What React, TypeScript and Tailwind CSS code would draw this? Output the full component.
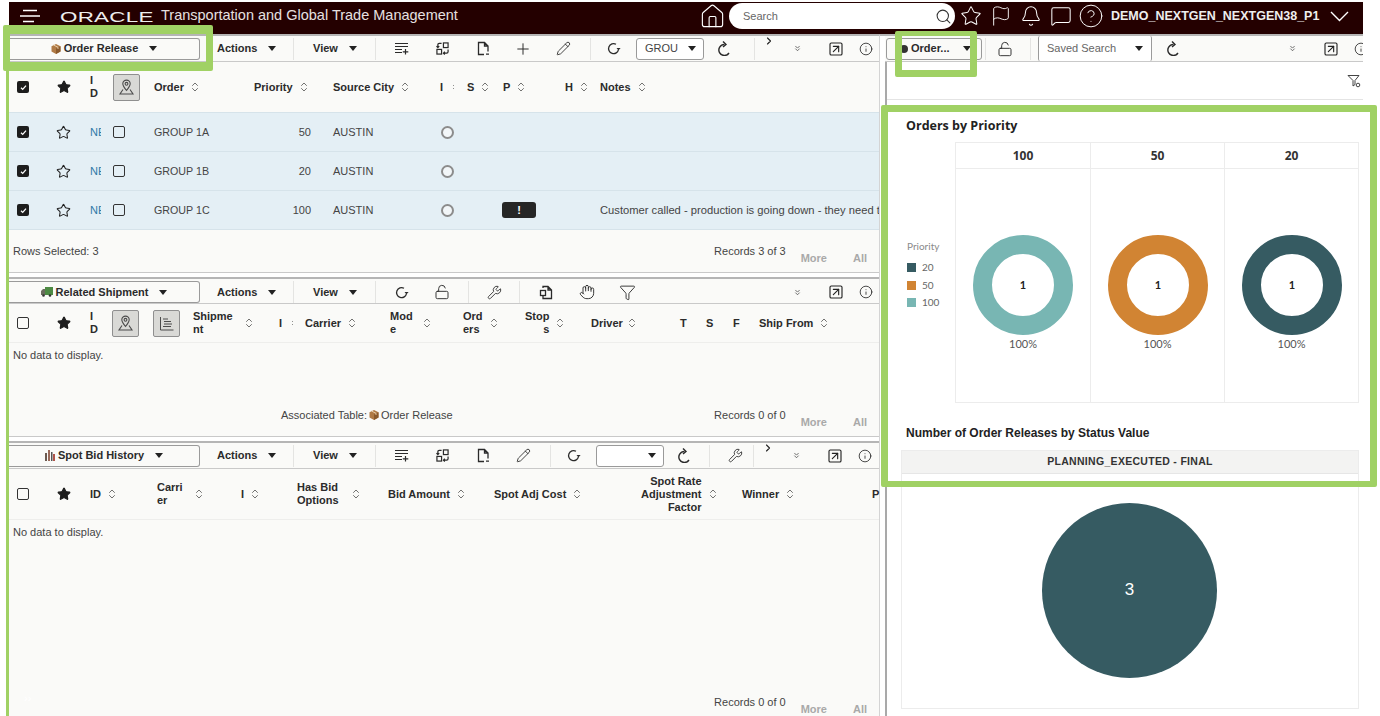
import { ReactNode } from "react";
import {
  Bell,
  ChevronRight,
  ChevronsDown,
  ChevronsUpDown,
  CircleHelp,
  Flag,
  Funnel,
  Hand,
  House,
  Info,
  LockOpen,
  MessageSquare,
  Pencil,
  Plus,
  Search,
  SquareArrowUpRight,
  Star,
  Wrench,
} from "lucide-react";

const ICON = "#2a2a2a";

const Caret = () => (
  <svg width="8" height="5" viewBox="0 0 8 5" className="shrink-0">
    <path d="M0 0h8L4 5z" fill="#222" />
  </svg>
);

const Sort = () => <ChevronsUpDown size={12} strokeWidth={1.5} color="#444" className="shrink-0" />;

const Checkbox = ({ checked = false }: { checked?: boolean }) =>
  checked ? (
    <span className="flex h-[12px] w-[12px] items-center justify-center rounded-[2px] bg-[#1d1d1d]">
      <svg width="9" height="9" viewBox="0 0 9 9">
        <path d="M2 4.8l1.7 1.6L7 2.6" fill="none" stroke="#fff" strokeWidth="1.3" />
      </svg>
    </span>
  ) : (
    <span className="block h-[12px] w-[12px] rounded-[2px] border border-[#333]" />
  );

const FilledStar = () => <Star size={14} fill="#1d1d1d" color="#1d1d1d" />;

const Box = ({ size = 10 }: { size?: number }) => (
  <svg width={size} height={size} viewBox="0 0 10 10" className="shrink-0">
    <path d="M5 0l4.5 2.2v5.3L5 10 .5 7.5V2.2z" fill="#b07a45" />
    <path d="M5 4.6L9.5 2.2v5.3L5 10z" fill="#8a5a2c" />
    <path d="M2.5 1L7 3.3v1.6" fill="none" stroke="#e8cda8" strokeWidth="1" />
  </svg>
);

const Truck = () => (
  <svg width="12" height="10" viewBox="0 0 12 10" className="shrink-0">
    <rect x="4" y="0" width="8" height="8" fill="#4d8a44" />
    <path d="M0 4l2-2h2v6H0z" fill="#6b6b5e" />
    <circle cx="2.5" cy="8.5" r="1.3" fill="#333" />
    <circle cx="9" cy="8.5" r="1.3" fill="#333" />
  </svg>
);

const BidIcon = () => (
  <svg width="10" height="11" viewBox="0 0 10 11" className="shrink-0">
    <rect x="0" y="3" width="2" height="8" fill="#6b5a50" />
    <rect x="3" y="0" width="2" height="11" fill="#9a6a5a" />
    <rect x="6" y="2" width="1.5" height="9" fill="#555" />
    <rect x="8" y="4" width="2" height="7" fill="#b0554a" />
  </svg>
);

const ListAdd = () => (
  <svg width="16" height="13" viewBox="0 0 16 13" fill="none" stroke={ICON} strokeWidth="1.2">
    <path d="M1 1.5h13M1 4.5h13M1 7.5h7M1 10.5h7M11.5 7v5.5M8.8 9.8h5.5" />
  </svg>
);

const Freeze = () => (
  <svg width="13" height="13" viewBox="0 0 14 14" fill="none" stroke={ICON} strokeWidth="1.3">
    <rect x="8" y="1" width="5" height="5" />
    <rect x="1" y="8" width="5" height="5" />
    <path d="M6 1.5H3.5Q2 1.5 2 3v3M.5 4.5L2 6l1.5-1.5M13 8v2.5Q13 12 11.5 12H8M9.5 10.5L8 12l1.5 1.5" />
  </svg>
);

const Doc = () => (
  <svg width="13" height="15" viewBox="0 0 13 15" fill="none" stroke={ICON} strokeWidth="1.3">
    <path d="M7 13.5H1.5v-12h6L11 5v5.5M7.5 1.5V5H11M9 13.2h3" />
  </svg>
);

const DocCopy = () => (
  <svg width="14" height="15" viewBox="0 0 14 15" fill="none" stroke={ICON} strokeWidth="1.3">
    <path d="M4 3V1.5h5L12.5 5v8.5H4V11M9 1.5V5h3.5" />
    <rect x="1.5" y="5.5" width="5" height="5" />
  </svg>
);

const Reload = () => (
  <svg width="15" height="15" viewBox="0 0 15 15" fill="none" stroke={ICON} strokeWidth="1.3">
    <path d="M12.5 8.5A5 5 0 1 1 10 3.3" />
    <path d="M10.5 7l2 2.2L14.6 7" fill={ICON} stroke="none" />
  </svg>
);

const Undo = () => (
  <svg width="14" height="15" viewBox="0 0 14 15" fill="none" stroke={ICON} strokeWidth="1.4">
    <path d="M12 12a5.5 5.5 0 1 1-4.500-8.500" />
    <path d="M6 .5l3 3-3 2.500" />
  </svg>
);

const MapButton = () => (
  <span className="flex h-[27px] w-[27px] items-center justify-center rounded-[2px] border border-[#8f8f8f] bg-[#d9d9d6]">
    <svg width="17" height="18" viewBox="0 0 17 18" fill="none" stroke="#4b4b4b" strokeWidth="1.1">
      <path d="M8.5 12.5C6 9.5 4.8 8 4.8 5.8a3.7 3.7 0 0 1 7.4 0c0 2.2-1.2 3.7-3.7 6.7z" />
      <circle cx="8.5" cy="5.8" r="1.4" />
      <path d="M5 11.5L2 16h13l-3-4.500" />
    </svg>
  </span>
);

const GanttButton = () => (
  <span className="flex h-[27px] w-[27px] items-center justify-center rounded-[2px] border border-[#8f8f8f] bg-[#d9d9d6]">
    <svg width="15" height="15" viewBox="0 0 15 15" fill="none" stroke="#4b4b4b" strokeWidth="1">
      <path d="M1.5 1v13h13M4 3h5M5 5.500h7M5 8h8M4 10.500h8" />
    </svg>
  </span>
);

const Slot = ({ className, children }: { className: string; children?: ReactNode }) => (
  <div className={`flex h-[22px] shrink-0 items-center justify-center ${className}`}>{children}</div>
);

const Menu = ({ label, className }: { label: string; className: string }) => (
  <div className={`flex h-[22px] shrink-0 items-center gap-[11px] border-r border-[#e4e4e2] text-[11px] font-bold text-[#2b2b2b] ${className}`}>
    {label} <Caret />
  </div>
);

const TableButton = ({ icon, label }: { icon: ReactNode; label: string }) => (
  <div className="flex h-[22px] w-[191px] shrink-0 items-center justify-center gap-[3px] rounded-r-[3px] border border-l-0 border-[#9a9a9a] bg-[#fafaf8] text-[11px] font-bold text-[#2b2b2b]">
    {icon}
    <span>{label}</span>
    <span className="ml-[8px]">
      <Caret />
    </span>
  </div>
);

const Select = ({ label }: { label?: string }) => (
  <div className="flex h-[22px] w-[68px] shrink-0 items-center justify-between rounded-[3px] border border-[#9a9a9a] bg-white pl-[8px] pr-[7px] text-[11px] text-[#444]">
    <span>{label}</span>
    <Caret />
  </div>
);

const Gt = () => (
  <Slot className="w-[28px] items-start border-l border-[#e4e4e2]">
    <ChevronRight size={12} strokeWidth={2.2} color="#222" className="-mt-[3px]" />
  </Slot>
);

const Dbl = () => <ChevronsDown size={9} strokeWidth={2} color="#444" />;

const ExpandIcon = () => <SquareArrowUpRight size={16} strokeWidth={1.7} color="#222" />;
const InfoIcon = () => <Info size={14} strokeWidth={1.4} color="#222" />;

const Corner = () => (
  <>
    <Slot className="w-[30px]">
      <Dbl />
    </Slot>
    <Slot className="ml-[4px] w-[40px]">
      <ExpandIcon />
    </Slot>
    <Slot className="w-[20px]">
      <InfoIcon />
    </Slot>
  </>
);

const Head = ({
  children,
  className = "",
  gap = "ml-[5px]",
}: {
  children: ReactNode;
  className?: string;
  gap?: string;
}) => (
  <div className={`flex items-center text-[11px] font-bold leading-[13px] text-[#2b2b2b] ${className}`}>
    <span>{children}</span>
    <span className={gap}>
      <Sort />
    </span>
  </div>
);

const Plain = ({ children, className = "" }: { children: ReactNode; className?: string }) => (
  <div className={`text-[11px] font-bold leading-[13px] text-[#2b2b2b] ${className}`}>{children}</div>
);

const StackedId = () => (
  <Plain className="pl-[9px]">
    I
    <br />D
  </Plain>
);

const CutSort = () => (
  <span className="ml-[7px] block w-[4px] overflow-hidden">
    <Sort />
  </span>
);

const Pager = ({ className = "" }: { className?: string }) => (
  <div className={`ml-[15px] flex gap-[26px] text-[11px] font-bold text-[#a9a9a9] ${className}`}>
    <span>More</span>
    <span>All</span>
  </div>
);

const Gap = () => (
  <div className="h-[7px] shrink-0 border-t border-[#c9c9c9] border-b-2 border-b-[#b5b5b5] bg-white" />
);

const P1COLS = "grid grid-cols-[37px_35px_28px_45px_100px_79px_107px_27px_36px_62px_35px_1fr] items-center";
const P2COLS = "grid grid-cols-[37px_35px_31px_41px_40px_86px_26px_85px_73px_62px_66px_89px_26px_27px_26px_1fr] items-center";
const P3COLS = "grid grid-cols-[37px_35px_76px_84px_56px_91px_106px_147px_101px_130px_1fr] items-center";

const rows = [
  { order: "GROUP 1A", priority: "50" },
  { order: "GROUP 1B", priority: "20" },
  { order: "GROUP 1C", priority: "100", flagged: true },
];

const OrderReleasePanel = () => (
  <>
    <div className="flex h-[26px] shrink-0 items-center border-b border-[#c9c9c9]">
      <TableButton icon={<Box />} label="Order Release" />
      <Menu label="Actions" className="ml-[5px] w-[89px] pl-[12px]" />
      <Menu label="View" className="w-[82px] pl-[19px]" />
      <Slot className="ml-[6px] w-[40px]"><ListAdd /></Slot>
      <Slot className="w-[41px]"><Freeze /></Slot>
      <Slot className="w-[40px]"><Doc /></Slot>
      <Slot className="w-[40px]"><Plus size={18} strokeWidth={1.3} color={ICON} /></Slot>
      <Slot className="w-[40px]"><Pencil size={15} strokeWidth={1.4} color={ICON} /></Slot>
      <Slot className="ml-[7px] w-[46px] border-l border-[#e4e4e2]"><Reload /></Slot>
      <Select label="GROU" />
      <Slot className="w-[39px]"><Undo /></Slot>
      <div className="w-[11px]" />
      <Gt />
      <Corner />
    </div>
    <div className={`${P1COLS} h-[50px] shrink-0`}>
      <div className="pl-[8px]"><Checkbox checked /></div>
      <div className="pl-[11px]"><FilledStar /></div>
      <StackedId />
      <div className="pl-[4px]"><MapButton /></div>
      <Head>Order</Head>
      <Head>Priority</Head>
      <Head>Source City</Head>
      <div className="flex items-center"><Plain>I</Plain><CutSort /></div>
      <Head>S</Head>
      <Head>P</Head>
      <Head>H</Head>
      <Head>Notes</Head>
    </div>
    {rows.map((row) => (
      <div key={row.order} className={`${P1COLS} h-[39px] shrink-0 border-t border-[#d6e3ea] bg-[#e4eff5] text-[11px] text-[#444]`}>
        <div className="pl-[8px]"><Checkbox checked /></div>
        <div className="pl-[10px]"><Star size={15} strokeWidth={1.7} color="#222" /></div>
        <div className="w-[20px] overflow-hidden whitespace-nowrap pl-[9px] text-[#2f7aa8]">NE</div>
        <div className="pl-[4px]"><Checkbox /></div>
        <div className="text-[10.7px]">{row.order}</div>
        <div className="pr-[22px] text-right">{row.priority}</div>
        <div>AUSTIN</div>
        <div className="pl-[1px]">
          <span className="block h-[13px] w-[13px] rounded-full border-2 border-[#8c8c8c] bg-[#f2f6f8]" />
        </div>
        <div />
        <div>
          {row.flagged && (
            <span className="-ml-[1px] flex h-[16px] w-[34px] items-center justify-center rounded-[3px] bg-[#262626] text-[11px] font-bold text-white">
              !
            </span>
          )}
        </div>
        <div />
        <div className="overflow-hidden whitespace-nowrap text-[11.2px]">
          {row.flagged && "Customer called - production is going down - they need the order"}
        </div>
      </div>
    ))}
    <div className="flex h-[43px] shrink-0 border-t border-[#d6e3ea] pl-[4px] pr-[12px] pt-[14px] text-[11px] leading-[14px] text-[#444]">
      <span>Rows Selected: 3</span>
      <span className="ml-auto">Records 3 of 3</span>
      <Pager className="mt-[7px]" />
    </div>
  </>
);

const ShipmentPanel = () => (
  <>
    <div className="flex h-[25px] shrink-0 items-center border-b border-[#c9c9c9] pr-[3px] pt-[2px]">
      <TableButton icon={<Truck />} label="Related Shipment" />
      <Menu label="Actions" className="ml-[5px] w-[89px] pl-[12px]" />
      <Menu label="View" className="w-[82px] pl-[19px]" />
      <Slot className="ml-[5px] w-[40px]"><Reload /></Slot>
      <Slot className="w-[41px]"><LockOpen size={16} strokeWidth={1.4} color={ICON} /></Slot>
      <Slot className="ml-[6px] w-[52px] border-x border-[#e4e4e2]"><Wrench size={15} strokeWidth={1.4} color={ICON} /></Slot>
      <Slot className="ml-[6px] w-[40px]"><DocCopy /></Slot>
      <Slot className="w-[42px]"><Hand size={16} strokeWidth={1.4} color={ICON} /></Slot>
      <Slot className="w-[38px]"><Funnel size={17} strokeWidth={1.3} color={ICON} /></Slot>
      <div className="flex-1" />
      <Corner />
    </div>
    <div className={`${P2COLS} h-[39px] shrink-0 border-b border-[#eeeeec]`}>
      <div className="pl-[8px]"><Checkbox /></div>
      <div className="pl-[11px]"><FilledStar /></div>
      <StackedId />
      <MapButton />
      <GanttButton />
      <Head gap="ml-[10px]">Shipme<br />nt</Head>
      <div className="flex items-center"><Plain>I</Plain><CutSort /></div>
      <Head>Carrier</Head>
      <Head gap="ml-[8px]">Mod<br />e</Head>
      <Head gap="ml-[5px]">Ord<br />ers</Head>
      <Head className="text-right" gap="ml-[5px]">Stop<br />s</Head>
      <Head gap="ml-[3px]">Driver</Head>
      <Plain>T</Plain>
      <Plain>S</Plain>
      <Plain>F</Plain>
      <Head>Ship From</Head>
    </div>
    <div className="flex h-[93px] shrink-0 flex-col pl-[4px] pr-[12px] pt-[5px] text-[11px] leading-[14px] text-[#444]">
      <div>No data to display.</div>
      <div className="mt-[46px] flex">
        <span className="ml-[268px] flex items-center gap-[2px] self-start">Associated Table: <Box /> Order Release</span>
        <span className="ml-auto">Records 0 of 0</span>
        <Pager className="mt-[7px]" />
      </div>
    </div>
  </>
);

const SpotBidPanel = () => (
  <div className="flex min-h-0 flex-1 flex-col">
    <div className="flex h-[26px] shrink-0 items-center border-b border-[#c9c9c9]">
      <TableButton icon={<BidIcon />} label="Spot Bid History" />
      <Menu label="Actions" className="ml-[5px] w-[89px] pl-[12px]" />
      <Menu label="View" className="w-[82px] pl-[19px]" />
      <Slot className="ml-[6px] w-[40px]"><ListAdd /></Slot>
      <Slot className="w-[41px]"><Freeze /></Slot>
      <Slot className="w-[40px]"><Doc /></Slot>
      <Slot className="w-[40px]"><Pencil size={15} strokeWidth={1.4} color={ICON} /></Slot>
      <Slot className="ml-[7px] w-[46px] border-l border-[#e4e4e2]"><Reload /></Slot>
      <Select />
      <Slot className="w-[39px]"><Undo /></Slot>
      <Slot className="ml-[6px] w-[44px] border-l border-[#e4e4e2] pl-[8px]"><Wrench size={15} strokeWidth={1.4} color={ICON} /></Slot>
      <Gt />
      <Corner />
    </div>
    <div className={`${P3COLS} h-[51px] shrink-0 border-b border-[#eeeeec]`}>
      <div className="pl-[8px]"><Checkbox /></div>
      <div className="pl-[11px]"><FilledStar /></div>
      <Head className="pl-[9px]">ID</Head>
      <Head gap="ml-[10px]">Carri<br />er</Head>
      <Head>I</Head>
      <Head gap="ml-[11px]">Has Bid<br />Options</Head>
      <Head>Bid Amount</Head>
      <Head>Spot Adj Cost</Head>
      <Head className="text-right">Spot Rate<br />Adjustment<br />Factor</Head>
      <Head>Winner</Head>
      <Plain>P</Plain>
    </div>
    <div className="flex min-h-0 flex-1 flex-col pl-[4px] pr-[12px] pt-[5px] text-[11px] leading-[14px] text-[#444]">
      <div>No data to display.</div>
      <div className="mt-[156px] flex">
        <span className="ml-auto">Records 0 of 0</span>
        <Pager className="mt-[7px]" />
      </div>
    </div>
  </div>
);

const Donut = ({ color }: { color: string }) => (
  <svg width="100" height="100" viewBox="0 0 100 100" className="mx-auto">
    <circle cx="50" cy="50" r="40.5" fill="none" stroke={color} strokeWidth="19" />
    <text x="50" y="54" textAnchor="middle" fontSize="11" fontWeight="700" fill="#222" fontFamily="Lato, sans-serif">
      1
    </text>
  </svg>
);

const priorities = [
  { label: "100", color: "#78b6b3" },
  { label: "50", color: "#d18433" },
  { label: "20", color: "#365b62" },
];

const ChartsPanel = () => (
  <div className="flex w-[478px] shrink-0 flex-col">
    <div className="flex h-[26px] shrink-0 items-center overflow-hidden border-b border-[#c9c9c9] bg-[#fafaf8]">
      <div className="ml-[1px] flex h-[22px] w-[96px] shrink-0 items-center rounded-[3px] border border-[#9a9a9a] pl-[13px] text-[11px] font-bold text-[#2b2b2b]">
        <span className="mr-[3px] h-[8px] w-[8px] rounded-full bg-[#333]" />
        Order...
        <span className="ml-[13px]"><Caret /></span>
      </div>
      <Slot className="ml-[3px] w-[46px] border-x border-[#e4e4e2] pr-[6px]"><LockOpen size={16} strokeWidth={1.4} color={ICON} /></Slot>
      <div className="ml-[7px] flex h-[25px] w-[114px] shrink-0 items-center justify-between rounded-[2px] border-x border-[#9a9a9a] bg-white pl-[8px] pr-[8px] text-[11px] text-[#666]">
        Saved Search
        <Caret />
      </div>
      <Slot className="ml-[2px] w-[38px]"><Undo /></Slot>
      <div className="w-[82px] shrink-0" />
      <Slot className="w-[36px]"><Dbl /></Slot>
      <Slot className="ml-[1px] w-[40px]"><ExpandIcon /></Slot>
      <Slot className="w-[20px]"><InfoIcon /></Slot>
    </div>
    <div className="flex min-h-0 flex-1 flex-col border-l-2 border-[#a9a9a9] bg-white">
      <div className="flex h-[38px] shrink-0 items-center justify-end border-b border-[#e4e4e4] pr-[2px]">
        <svg width="14" height="14" viewBox="0 0 14 14" fill="none" stroke="#444" strokeWidth="1">
          <path d="M1 1.5h11L8 6.5v4L6 12V6.500z" />
          <circle cx="11" cy="11" r="1.8" />
        </svg>
      </div>
      <div className="ml-[19px] mt-[19px] h-[14px] whitespace-nowrap text-[12.5px] font-bold leading-[14px] text-[#222] [font-family:'Open_Sans',sans-serif]">
        Orders by Priority
      </div>
      <div className="mt-[9px] flex h-[261px] shrink-0">
        <div className="ml-[20px] w-[48px] shrink-0 pt-[97px] text-[10px] text-[#666] [font-family:Lato,sans-serif]">
          <div className="mb-[5px] text-[#8a8a8a]">Priority</div>
          {[...priorities].reverse().map((item) => (
            <div key={item.label} className="flex h-[17.5px] items-center gap-[6px]">
              <span className="h-[9px] w-[9px]" style={{ backgroundColor: item.color }} />
              {item.label}
            </div>
          ))}
        </div>
        <div className="grid w-[404px] grid-cols-3 border border-[#ececec]">
          {priorities.map((item, i) => (
            <div key={item.label} className={`flex flex-col ${i > 0 ? "border-l border-[#ececec]" : ""}`}>
              <div className="flex h-[26px] shrink-0 items-center justify-center border-b border-[#ececec] text-[12px] font-bold text-[#333] [font-family:'Open_Sans',sans-serif]">
                {item.label}
              </div>
              <div className="pt-[66px] text-center text-[11px] leading-[14px] text-[#555] [font-family:Lato,sans-serif]">
                <Donut color={item.color} />
                <div className="mt-[2px]">100%</div>
              </div>
            </div>
          ))}
        </div>
      </div>
      <div className="ml-[19px] mt-[23px] h-[14px] text-[12px] font-bold leading-[14px] text-[#222]">
        Number of Order Releases by Status Value
      </div>
      <div className="ml-[14px] mt-[10px] flex h-[259px] w-[458px] shrink-0 flex-col border border-[#ececec]">
        <div className="flex h-[23px] shrink-0 items-center justify-center border-b border-[#e6e6e6] bg-[#f3f3f2] text-[10.5px] font-bold tracking-[0.3px] text-[#333]">
          PLANNING_EXECUTED - FINAL
        </div>
        <div className="flex flex-1 items-center justify-center pb-[2px] pr-[1px]">
          <div className="flex h-[175px] w-[175px] items-center justify-center rounded-full bg-[#365b62] pb-[1px] text-[17px] text-white">
            3
          </div>
        </div>
      </div>
    </div>
  </div>
);

export default function App() {
  return (
    <div className="relative flex h-[716px] w-[1380px] flex-col overflow-hidden bg-white pl-[9px] pr-[17px] pt-[2px] [font-family:'Liberation_Sans',Arial,sans-serif]">
      <header className="flex h-[32px] shrink-0 items-center bg-[#240000] pb-[4px] pr-[14px] text-white">
        <svg width="20" height="14" viewBox="0 0 20 14" className="ml-[11px] shrink-0" stroke="#fff" strokeWidth="1.5">
          <path d="M3 1.5h14M0 7h20M3 12.5h11" />
        </svg>
        <span className="ml-[20px] w-[93px] origin-left scale-x-[1.49] whitespace-nowrap text-[15px] leading-none tracking-[0.2px] text-[#eee]">
          ORACLE
        </span>
        <span className="ml-[8px] whitespace-nowrap text-[14.5px] text-[#e6e0e0]">Transportation and Global Trade Management</span>
        <div className="flex-1" />
        <House size={27} strokeWidth={1} color="#fff" className="-mx-[2px] shrink-0" />
        <div className="ml-[5px] flex h-[26px] w-[226px] shrink-0 items-center justify-between rounded-full bg-white pl-[14px] pr-[3px] text-[11px] text-[#666]">
          Search
          <Search size={17} strokeWidth={1.5} color="#333" />
        </div>
        <div className="ml-[6px] flex w-[20px] justify-center"><Star size={22} strokeWidth={1.1} className="shrink-0" /></div>
        <div className="ml-[10px] flex w-[20px] justify-center"><Flag size={22} strokeWidth={1} className="shrink-0" /></div>
        <div className="ml-[10px] flex w-[20px] justify-center"><Bell size={22} strokeWidth={1.1} className="shrink-0" /></div>
        <div className="ml-[10px] flex w-[20px] justify-center"><MessageSquare size={22} strokeWidth={1.1} className="shrink-0" /></div>
        <div className="ml-[10px] flex w-[20px] justify-center"><CircleHelp size={26} strokeWidth={0.9} className="shrink-0" /></div>
        <span className="ml-[10px] w-[209px] whitespace-nowrap text-[12.5px] font-bold text-[#eee]">DEMO_NEXTGEN_NEXTGEN38_P1</span>
        <svg width="19" height="11" viewBox="0 0 19 11" fill="none" stroke="#fff" strokeWidth="1.4" className="ml-[10px] shrink-0">
          <path d="M1 1l8.500 8.500L18 1" />
        </svg>
      </header>
      <div className="flex min-h-0 flex-1">
        <div className="flex w-[871px] shrink-0 flex-col border-r border-[#d4d4d4] border-t-2 border-t-[#b5b5b5] bg-[#fafaf8]">
          <OrderReleasePanel />
          <Gap />
          <ShipmentPanel />
          <Gap />
          <SpotBidPanel />
        </div>
        <div className="w-[5px] shrink-0 border-t-2 border-t-[#b5b5b5]" />
        <div className="flex shrink-0 border-t-2 border-t-[#b5b5b5]">
          <ChartsPanel />
        </div>
      </div>

      {/* green annotation frames */}
      <div className="absolute left-[6px] top-[60px] h-[656px] w-[3px] bg-[#a0d164]" />
      <div className="absolute left-[3px] top-[25px] h-[46px] w-[210px] rounded-[2px] border-x-[7px] border-y-[9px] border-[#a0d164]" />
      <div className="absolute left-[895px] top-[31px] h-[46px] w-[82px] rounded-[2px] border-x-[7px] border-b-[7px] border-t-[5px] border-[#a0d164]" />
      <div className="absolute left-[881px] top-[105px] h-[382px] w-[496px] rounded-[2px] border-[7px] border-b-[6px] border-[#a0d164]" />
      <span className="absolute bottom-[10px] left-[24px] text-[11px] text-white">››</span>
    </div>
  );
}
